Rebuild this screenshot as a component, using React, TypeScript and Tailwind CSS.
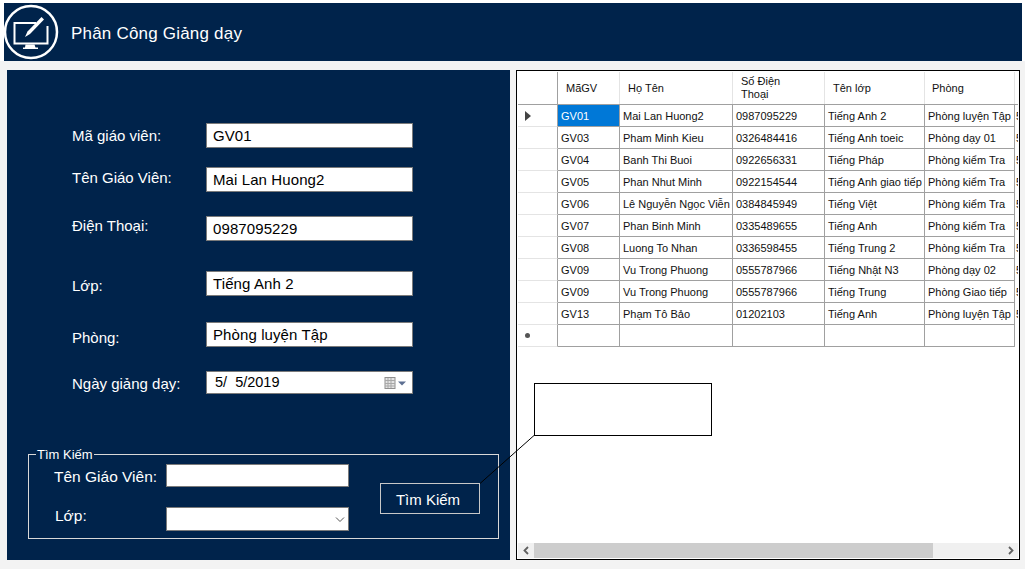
const font = { fontFamily: '"Liberation Sans", "Noto Sans", sans-serif' };

const rows = [
  ['GV01', 'Mai Lan Huong2', '0987095229', 'Tiếng Anh 2', 'Phòng luyện Tập'],
  ['GV03', 'Pham Minh Kieu', '0326484416', 'Tiếng Anh toeic', 'Phòng dạy 01'],
  ['GV04', 'Banh Thi Buoi', '0922656331', 'Tiếng Pháp', 'Phòng kiểm Tra'],
  ['GV05', 'Phan Nhut Minh', '0922154544', 'Tiếng Anh giao tiếp', 'Phòng kiểm Tra'],
  ['GV06', 'Lê Nguyễn Ngọc Viễn', '0384845949', 'Tiếng Việt', 'Phòng kiểm Tra'],
  ['GV07', 'Phan Binh Minh', '0335489655', 'Tiếng Anh', 'Phòng kiểm Tra'],
  ['GV08', 'Luong To Nhan', '0336598455', 'Tiếng Trung 2', 'Phòng kiểm Tra'],
  ['GV09', 'Vu Trong Phuong', '0555787966', 'Tiếng Nhật N3', 'Phòng dạy 02'],
  ['GV09', 'Vu Trong Phuong', '0555787966', 'Tiếng Trung', 'Phòng Giao tiếp'],
  ['GV13', 'Phạm Tô Bảo', '01202103', 'Tiếng Anh', 'Phòng luyện Tập'],
];

const colClass = [
  'w-[62px] shrink-0 border-r border-b border-[#a0a0a0] pl-[3px]',
  'w-[113px] shrink-0 border-r border-b border-[#a0a0a0] pl-[3px]',
  'w-[92px] shrink-0 border-r border-b border-[#a0a0a0] pl-[3px]',
  'w-[100px] shrink-0 border-r border-b border-[#a0a0a0] pl-[3px]',
  'w-[90px] shrink-0 border-r border-b border-[#a0a0a0] pl-[3px]',
];

function FormRow({ label, value, mt, labelShift }: { label: string; value: string; mt: string; labelShift: string }) {
  return (
    <div className={`flex h-[25px] items-center ${mt}`}>
      <div className={`w-[134px] text-[15px] whitespace-nowrap text-white ${labelShift}`}>{label}</div>
      <div className="flex h-[25px] w-[207px] items-center border border-[#7a7a7a] bg-white pt-[2px] pl-[6px] text-[15px] tracking-[0.1px] text-black">
        {value}
      </div>
    </div>
  );
}

function MonitorIcon() {
  return (
    <svg width="60" height="60" viewBox="0 0 60 60" fill="none" className="shrink-0">
      <circle cx="30" cy="30" r="26" stroke="#fff" strokeWidth="2.500" />
      <path d="M35 21H13.500V41.500H46.500V24" stroke="#fff" strokeWidth="2" />
      <path d="M24.500 42.500h9l1 3h2.500V47H22v-1.500h2z" fill="#fff" />
      <path d="M40.500 15l2.500 2.500L29 32l-5 3 2.500-5.500z" fill="#fff" />
    </svg>
  );
}

export default function App() {
  return (
    <div className="relative h-[574px] w-[1025px] overflow-hidden bg-white" style={font}>
      {/* header */}
      <div className="mt-[3px] ml-[4px] flex h-[58px] w-[1018px] items-center bg-[#00234b]">
        <div className="-ml-[3px]">
          <MonitorIcon />
        </div>
        <span className="ml-[10px] translate-y-[2px] text-[17px] tracking-[0.2px] text-white">Phân Công Giảng dạy</span>
      </div>

      <div className="flex h-[508px] bg-[#f3f3f3] pt-[9px] pl-[7px]">
        {/* left panel */}
        <div className="h-[490px] w-[503px] shrink-0 bg-[#00234b] pl-[21px]">
          <div className="pl-[44px]">
            <FormRow label="Mã giáo viên:" value="GV01" mt="mt-[53px]" labelShift="translate-y-[1px]" />
            <FormRow label="Tên Giáo Viên:" value="Mai Lan Huong2" mt="mt-[19px]" labelShift="-translate-y-[1px]" />
            <FormRow label="Điện Thoại:" value="0987095229" mt="mt-[24px]" labelShift="-translate-y-[2px]" />
            <FormRow label="Lớp:" value="Tiếng Anh 2" mt="mt-[30px]" labelShift="translate-y-[3px]" />
            <FormRow label="Phòng:" value="Phòng luyện Tập" mt="mt-[26px]" labelShift="translate-y-[4px]" />
            <div className="mt-[24px] flex h-[23px] items-center">
              <div className="w-[134px] translate-y-[2px] text-[15px] whitespace-nowrap text-white">Ngày giảng dạy:</div>
              <div className="flex h-[23px] w-[207px] items-center justify-between border border-[#7a7a7a] bg-white pr-[2px] pl-[8px] text-[14.500px] text-black">
                <span className="whitespace-pre">5/  5/2019</span>
                <svg width="26" height="14" viewBox="0 0 26 14" fill="none">
                  <rect x="1" y="1.500" width="10" height="11" fill="#e4e4e4" stroke="#8f8f8f" />
                  <path d="M1 4.500h10M1 7.500h10M1 10h10M4 2v10M7 2v10" stroke="#a8a8a8" />
                  <path d="M14 5.500h8l-4 4z" fill="#5d6f92" />
                </svg>
              </div>
            </div>
          </div>

          {/* search group */}
          <div className="relative mt-[60px] h-[85px] w-[471px] border border-[#d8d8d8]">
            <span className="absolute -top-[8px] left-[7px] bg-[#00234b] px-[1px] text-[13px] leading-[16px] text-white">Tìm Kiếm</span>
            <div className="flex h-full">
              <div className="w-[351px] pt-[9px] pl-[25px]">
                <div className="flex h-[23px] items-center">
                  <span className="w-[112px] translate-y-[1px] text-[15.500px] whitespace-nowrap text-white">Tên Giáo Viên:</span>
                  <div className="h-[23px] w-[183px] border border-[#7a7a7a] bg-white" />
                </div>
                <div className="mt-[20px] flex h-[24px] items-center">
                  <span className="w-[112px] -translate-y-[3px] pl-[1px] text-[15.500px] text-white">Lớp:</span>
                  <div className="flex h-[24px] w-[183px] items-center justify-end border border-[#7a7a7a] bg-white pr-[2px]">
                    <svg width="12" height="12" viewBox="0 0 12 12" fill="none">
                      <path d="M2 4.500l4 4 4-4" stroke="#555" strokeWidth="1" />
                    </svg>
                  </div>
                </div>
              </div>
              <div className="mt-[28px] flex h-[31px] w-[100px] items-center justify-center border border-[#c8c8c8] pt-[3px] pr-[4px] text-[15px] text-white">
                Tìm Kiếm
              </div>
            </div>
          </div>
        </div>

        {/* data grid */}
        <div className="ml-[6px] flex h-[490px] w-[504px] shrink-0 flex-col border border-black bg-white p-[1px] text-[11px] text-[#111]">
          <div className="flex-1 overflow-hidden">
            <div className="flex h-[33px] border-b border-[#a0a0a0]">
              <div className="w-[40px] shrink-0 border-r border-[#a0a0a0]" />
              <div className="flex w-[62px] shrink-0 items-center border-r border-[#e4e4e4] pl-[8px]">MãGV</div>
              <div className="flex w-[113px] shrink-0 items-center border-r border-[#e4e4e4] pl-[8px]">Họ Tên</div>
              <div className="flex w-[92px] shrink-0 items-center border-r border-[#e4e4e4] pl-[8px] leading-[13px]">
                <span>
                  Số Điện
                  <br />
                  Thoại
                </span>
              </div>
              <div className="flex w-[100px] shrink-0 items-center border-r border-[#e4e4e4] pl-[8px]">Tên lớp</div>
              <div className="flex w-[90px] shrink-0 items-center border-r border-[#e4e4e4] pl-[7px]">Phòng</div>
            </div>
            {rows.map((row, i) => (
              <div key={i} className="flex h-[22px] leading-[22px] whitespace-nowrap">
                <div className="flex w-[40px] shrink-0 items-center border-r border-b border-r-[#a0a0a0] border-b-[#e4e4e4] pl-[7px]">
                  {i === 0 && (
                    <svg width="6" height="10" viewBox="0 0 6 10">
                      <path d="M0 0l6 5-6 5z" fill="#444" />
                    </svg>
                  )}
                </div>
                {row.map((cell, j) => (
                  <div key={j} className={`${colClass[j]} ${i === 0 && j === 0 ? 'bg-[#0078d7] text-white' : ''}`}>
                    {cell}
                  </div>
                ))}
                <div className="w-[4px] overflow-hidden pl-[1px]">5</div>
              </div>
            ))}
            <div className="flex h-[22px]">
              <div className="flex w-[40px] shrink-0 items-center border-r border-b border-r-[#a0a0a0] border-b-[#e4e4e4] pl-[7px]">
                <span className="h-[5px] w-[5px] rounded-full bg-[#555]" />
              </div>
              <div className={colClass[0]} />
              <div className={colClass[1]} />
              <div className={colClass[2]} />
              <div className={colClass[3]} />
              <div className={colClass[4]} />
            </div>
          </div>
          {/* horizontal scrollbar */}
          <div className="flex h-[15px] items-center bg-[#f0f0f0]">
            <div className="flex w-[16px] shrink-0 justify-center">
              <svg width="6" height="9" viewBox="0 0 6 9" fill="none">
                <path d="M5 1L1.500 4.500 5 8" stroke="#606060" strokeWidth="1.800" />
              </svg>
            </div>
            <div className="h-[15px] w-[399px] bg-[#cdcdcd]" />
            <div className="flex flex-1 justify-end pr-[4px]">
              <svg width="6" height="9" viewBox="0 0 6 9" fill="none">
                <path d="M1 1l3.500 3.500L1 8" stroke="#606060" strokeWidth="1.800" />
              </svg>
            </div>
          </div>
        </div>
      </div>

      {/* callout over the grid */}
      <div className="absolute top-[383px] left-[534px] h-[53px] w-[178px] border border-black bg-white" />
      <svg className="absolute top-[435px] left-[479px]" width="56" height="50" viewBox="0 0 56 50" fill="none">
        <path d="M55 0.500L1 48.500" stroke="#000" strokeWidth="1" />
      </svg>
    </div>
  );
}
